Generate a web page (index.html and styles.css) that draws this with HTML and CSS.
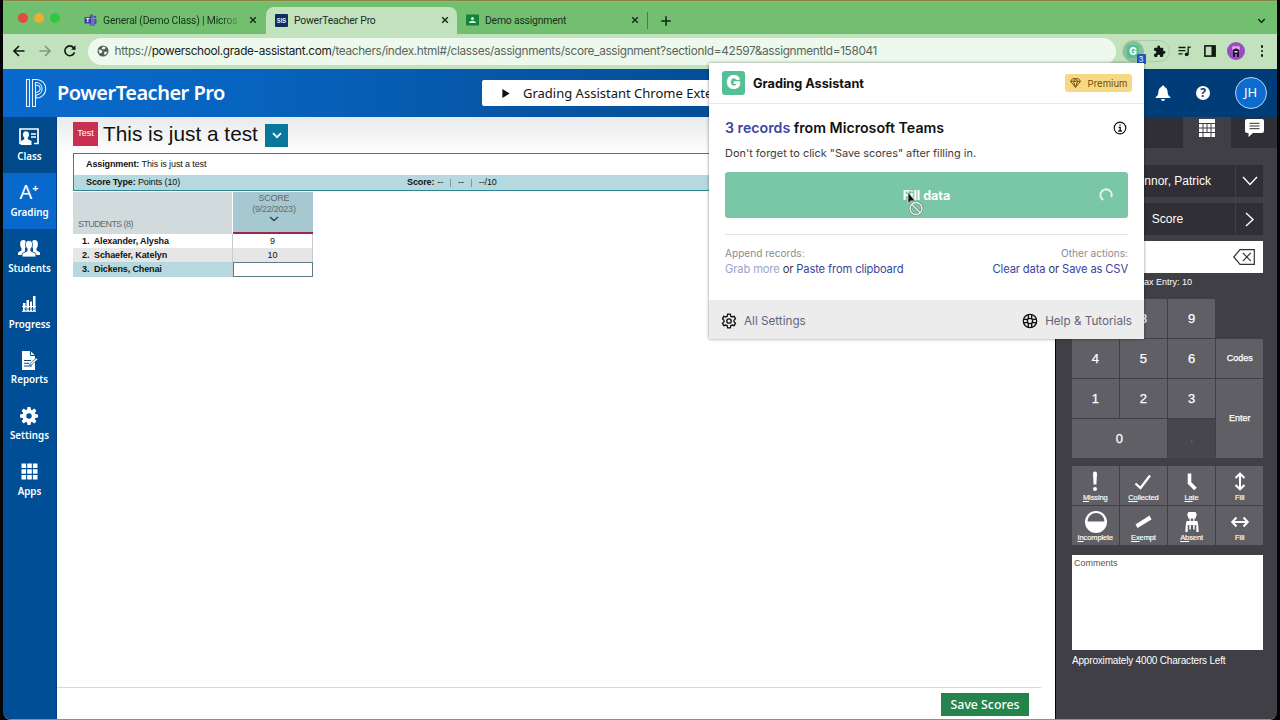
FILE: index.html
```html
<!DOCTYPE html>
<html lang="en">
<head>
<meta charset="utf-8">
<title>PowerTeacher Pro</title>
<link rel="stylesheet" href="styles.css">
</head>
<body>
<div class="window">
  <div class="tabstrip">
    <div class="lights"><i class="red"></i><i class="yellow"></i><i class="green"></i></div>
    <div class="tab tab-teams">
      <svg class="fav" viewBox="0 0 12 12"><circle cx="7" cy="2.2" r="1.9" fill="#5b55b8"/><circle cx="10.5" cy="3" r="1.3" fill="#4f50b5"/><path d="M4 4.5h6v5a2.5 2.5 0 0 1-5 2z" fill="#6f69cc"/><path d="M10 5h2v3.500a2 2 0 0 1-2 2z" fill="#4b4cb0"/><rect y="3" width="6.500" height="6.500" rx=".6" fill="#3f3fae"/><path d="M1.700 4.600h3.200M3.300 4.600v3.600" stroke="#fff" stroke-width="1"/></svg>
      <span class="tab-title fade">General (Demo Class) | Micros</span>
      <svg class="x" viewBox="0 0 8 8"><path d="M1.200 1.200l5.600 5.600M6.800 1.200L1.200 6.800"/></svg>
    </div>
    <div class="tab tab-active">
      <span class="sis">SIS</span>
      <span class="tab-title">PowerTeacher Pro</span>
      <svg class="x" viewBox="0 0 8 8"><path d="M1.200 1.200l5.600 5.600M6.800 1.200L1.200 6.800"/></svg>
    </div>
    <div class="tab tab-demo">
      <svg class="fav" viewBox="0 0 13 11"><rect width="13" height="11" rx="1" fill="#14823b"/><circle cx="6.500" cy="4" r="1.500" fill="#d9f5dc"/><path d="M3 8.500c0-3 7-3 7 0z" fill="#d9f5dc"/></svg>
      <span class="tab-title">Demo assignment</span>
      <svg class="x" viewBox="0 0 8 8"><path d="M1.200 1.200l5.600 5.600M6.800 1.200L1.200 6.800"/></svg>
    </div>
    <i class="tab-sep"></i>
    <svg class="plus" viewBox="0 0 10 10"><path d="M5 .3v9.400M.3 5h9.400"/></svg>
    <svg class="tabs-menu" viewBox="0 0 8 6"><path d="M.8 1l3.200 3.400L7.200 1"/></svg>
  </div>

  <div class="toolbar">
    <svg class="nav-icon back" viewBox="0 0 12 12"><path d="M11.500 6H1.300M6 1L1 6l5 5"/></svg>
    <svg class="nav-icon fwd" viewBox="0 0 12 12"><path d="M.5 6h10.200M6 1l5 5-5 5"/></svg>
    <svg class="nav-icon reload" viewBox="0 0 12 12"><path d="M10.500 7.200A4.900 4.900 0 1 1 9.600 2.700L11 4.200"/><path d="M11.500.3v4.400H7.100z" class="solid"/></svg>
    <div class="omnibox">
      <svg class="globe" viewBox="0 0 12 12"><circle cx="6" cy="6" r="5.500" fill="#555c58"/><path d="M1.500 4.500l3 .5 1 1.500-1 1.500-2 .5zM6 1.500l2.500.5-.5 2-2 .5-1.500-1zM7 7l3-.5-.5 2.500L7.500 10z" fill="#edf9ec"/></svg>
      <span class="url">https://<b>powerschool.grade-assistant.com</b>/teachers/index.html#/classes/assignments/score_assignment?sectionId=42597&amp;assignmentId=158041</span>
    </div>
    <div class="ext-group">
      <span class="ext-ga"><span class="ext-g">G</span><span class="ext-badge">3</span></span>
      <svg class="puzzle" viewBox="0 0 24 24"><path d="M20.500 11H19V7a2 2 0 0 0-2-2h-4V3.500a2.500 2.500 0 0 0-5 0V5H4a2 2 0 0 0-2 2v3.800h1.500a2.700 2.700 0 0 1 0 5.400H2V20a2 2 0 0 0 2 2h3.800v-1.500a2.700 2.700 0 0 1 5.400 0V22H17a2 2 0 0 0 2-2v-4h1.500a2.500 2.500 0 0 0 0-5z"/></svg>
    </div>
    <svg class="queue" viewBox="0 0 13 11"><path d="M.5 1.500h7M.5 4.700h7M.5 7.900h4M12.800 1.200h-2.600v6.500" /><circle cx="8.700" cy="8.300" r="1.900" class="solid"/></svg>
    <svg class="sidepanel" viewBox="0 0 12 12"><rect x=".9" y=".9" width="10.200" height="10.200"/><path d="M7.500 1h3.600v10H7.500z" class="solid"/></svg>
    <svg class="avatar" viewBox="0 0 18 18"><circle cx="9" cy="9" r="9" fill="#9a4dc0"/><path d="M5 5.500l1.500-1.800L9 4.500l2.500-.8L13 5.500 12.500 8h-7z" fill="#e6a6ee"/><path d="M6 15V9.500a3 3 0 0 1 6 0V15h-2v-3H8v3z" fill="#20142c"/><path d="M7.500 9h3v1.500h-3z" fill="#e9dcf0"/></svg>
    <div class="dots"><i></i><i></i><i></i></div>
  </div>

  <header class="app-header">
    <svg class="logo" viewBox="0 0 24 30"><path d="M1.500 1.500h3v27h-3zM7.500 28.500v-27h4a9.200 9.200 0 0 1 0 18.500H11v-3h.6a6.300 6.300 0 0 0 0-12.500H10.500v24zM11 14.200h.6a3.500 3.500 0 0 0 0-7H11"/></svg>
    <h1>PowerTeacher Pro</h1>
    <div class="class-picker"><svg viewBox="0 0 8 10"><path d="M0 0l8 5-8 5z"/></svg><span>Grading Assistant Chrome Exte</span></div>
    <svg class="bell" viewBox="0 0 16 16"><path d="M8 .5c1 0 1.400.6 1.400 1.400C12 2.700 12.600 5 12.700 7.500c.1 2.400 1 3.500 2.600 4.500v1H.7v-1c1.600-1 2.500-2.100 2.600-4.500C3.400 5 4 2.700 6.600 1.900 6.600 1.100 7 .5 8 .5zM6 14h4a2 2 0 0 1-4 0z" fill="#fff"/></svg>
    <span class="help">?</span>
    <span class="user">JH</span>
  </header>

  <div class="body">
    <nav class="sidebar">
      <a><svg width="20" height="17" viewBox="0 0 20 17"><path d="M3 15.500H1V1h18v14.500h-4" fill="none" stroke="#fff" stroke-width="1.700"/><path d="M12 6h5M12 9h5" stroke="#fff" stroke-width="1.500"/><path d="M7 3.300c2 0 3.200 1.500 3 3.700-.1 1.200-.7 2-1.200 2.700v1.600l3.700 1.600V17H2v-4.100l3.300-1.600V9.700C4.600 9 4 8 4 7c-.2-2.200 1-3.700 3-3.700z" fill="#fff"/></svg><span>Class</span></a>
      <a class="on"><span class="aplus">A<sup>+</sup></span><span>Grading</span></a>
      <a><svg width="24" height="18" viewBox="0 0 24 18"><g fill="#fff"><path d="M6.500 1c2 0 2.700 1.500 2.500 3.500 0 2 0 4-1 5v3L6 16H1v-2.500l3.500-2V9.300C3.300 8 3 6 3.200 4 3.300 2 4.500 1 6.500 1zM17.500 1c-2 0-2.700 1.500-2.500 3.500 0 2 0 4 1 5v3l2 3.500h5v-2.500l-3.500-2V9.300C20.700 8 21 6 20.800 4 20.700 2 19.500 1 17.500 1z"/><path d="M12 1.500c2.600 0 3.800 2 3.500 4.500-.2 1.800-.8 2.800-1.600 3.600V12l5 2.500V18H5.100v-3.500l5-2.500V9.600C9.300 8.800 8.700 7.800 8.500 6 8.200 3.500 9.400 1.500 12 1.500z" stroke="#004f96" stroke-width=".8"/></g></svg><span>Students</span></a>
      <a><svg width="14" height="16" viewBox="0 0 14 16"><path d="M1 7h2.500v8H1zM4.500 4H7v11H4.500zM8 5.500h2V15H8zM11 0h2.500v15H11z" fill="#fff"/><path d="M0 10.500h14M0 15.300h14" stroke="#fff" stroke-width="1"/><path d="M3 12v2M6 12v2M9 12v2M12 12v2" stroke="#004f96" stroke-width=".8"/></svg><span>Progress</span></a>
      <a><svg width="17" height="19" viewBox="0 0 17 19"><path d="M1 0h8.500L14 4.500V19H1z" fill="#fff"/><path d="M9.500 0v4.500H14M3 9.500h7M3 12.300h5M3 15h8" stroke="#004f96" fill="none"/><path d="M8.500 14.500l1-2.500 6-5 1.300 1.500-6 5z" fill="#fff" stroke="#004f96" stroke-width=".7"/></svg><span>Reports</span></a>
      <a><svg width="18" height="18" viewBox="0 0 18 18"><g fill="#fff"><circle cx="9" cy="9" r="6.500"/><path d="M7.500 0h3l.8 4H6.700z"/><path d="M7.500 18h3l.8-4H6.700zM0 7.500v3l4 .8V6.700zM18 7.500v3l-4 .8V6.700zM1.600 3.700l2.100-2.100 3.400 2.300-3.200 3.200zM16.400 3.700l-2.100-2.100-3.400 2.300 3.200 3.200zM1.600 14.300l2.100 2.100 3.400-2.300-3.200-3.200zM16.400 14.300l-2.100 2.100-3.400-2.300 3.200-3.200z"/></g><circle cx="9" cy="9" r="2.700" fill="#004f96"/></svg><span>Settings</span></a>
      <a><svg width="17" height="17" viewBox="0 0 17 17"><path d="M.5.5h4.600v4.600H.5zM6.200.5h4.600v4.600H6.200zM11.900.5h4.600v4.600h-4.600zM.5 6.200h4.600v4.600H.5zM6.200 6.200h4.600v4.600H6.200zM11.900 6.200h4.600v4.600h-4.600zM.5 11.900h4.600v4.600H.5zM6.200 11.900h4.600v4.600H6.200zM11.900 11.900h4.600v4.600h-4.600z" fill="#fff"/></svg><span>Apps</span></a>
    </nav>

    <main class="main">
      <div class="title-row"><span class="test-chip">Test</span><h2>This is just a test</h2><span class="title-menu"><svg width="10" height="7" viewBox="0 0 10 7"><path d="M1 1.200l4 4 4-4"/></svg></span></div>
      <div class="info">
        <div class="info-row"><b>Assignment:</b>&nbsp;This is just a test</div>
        <div class="info-row tint"><span class="stype"><b>Score Type:</b>&nbsp;Points (10)</span><span class="sscore"><b>Score:</b> --<i></i>--<i></i>--/10</span></div>
      </div>
      <div class="grid">
        <div class="gh students">STUDENTS (8)</div>
        <div class="gh score"><span>SCORE</span><span>(9/22/2023)</span><svg width="10" height="6" viewBox="0 0 10 6"><path d="M1 1l4 3.500L9 1"/></svg></div>
        <div class="name">1.&nbsp; Alexander, Alysha</div><div class="val">9</div>
        <div class="name alt">2.&nbsp; Schaefer, Katelyn</div><div class="val alt">10</div>
        <div class="name sel">3.&nbsp; Dickens, Chenai</div><div class="val edit"></div>
      </div>
      <div class="footer"><button class="save">Save Scores</button></div>
    </main>

    <aside class="panel">
      <div class="ptabs">
        <span class="pt dark"></span>
        <span class="pt"><svg width="16" height="18" viewBox="0 0 16 18"><path d="M0 0h16v18H0z" fill="#fff"/><path d="M0 4.500h16M0 9h16M0 13.500h16M4 4v9.500M8 4v9.500M12 4v14M4 13.500V18" stroke="#403f46" stroke-width="1"/></svg></span>
        <span class="pt dark last"><svg width="19" height="18" viewBox="0 0 19 18"><path d="M2 0h15a2 2 0 0 1 2 2v10a2 2 0 0 1-2 2H8l-4.500 4V14H2a2 2 0 0 1-2-2V2a2 2 0 0 1 2-2z" fill="#fff"/><path d="M4.500 4.300h10M4.500 7h10M4.500 9.700h10" stroke="#302f35" stroke-width="1"/></svg></span>
      </div>
      <div class="pbody">
        <div class="prow"><span class="pfield">O'Connor, Patrick</span><span class="pchev"><svg width="16" height="10" viewBox="0 0 16 10"><path d="M1 1l7 7.500L15 1"/></svg></span></div>
        <div class="prow second"><span class="pfield">Score</span><span class="pchev"><svg width="9" height="15" viewBox="0 0 9 15"><path d="M1 1l7 6.500L1 14"/></svg></span></div>
        <div class="entry"><svg width="22" height="16" viewBox="0 0 22 16"><path d="M7 .7h14.300v14.600H7L.8 8z"/><path d="M9.800 3.800l8 8.400M17.800 3.800l-8 8.400" stroke-width="1.700"/></svg></div>
        <div class="max">Max Entry: 10</div>
        <div class="keypad">
          <span>7</span><span>8</span><span>9</span><span class="blank"></span>
          <span>4</span><span>5</span><span>6</span><span class="small">Codes</span>
          <span>1</span><span>2</span><span>3</span><span class="small enter">Enter</span>
          <span class="zero">0</span><span class="off">.</span>
        </div>
        <div class="flags">
          <span><svg viewBox="0 0 24 22"><path d="M10 2.500a2 2 0 0 1 4 0l-.6 11h-2.800z" fill="#fff"/><circle cx="12" cy="18" r="2" fill="#fff"/></svg><em><u>M</u>issing</em></span>
          <span><svg viewBox="0 0 24 22"><path d="M4.500 12.500l5 4.500L19 4.500" class="ln" stroke-width="2.300"/></svg><em><u>Co</u>llected</em></span>
          <span><svg viewBox="0 0 24 22"><path d="M9.500 2.500v9.500l6 6" class="ln" stroke-width="3.600"/></svg><em><u>La</u>te</em></span>
          <span><svg viewBox="0 0 24 22"><path d="M12 3v15M7.500 7L12 2.700 16.500 7M7.500 14l4.500 4.300 4.500-4.300" class="ln" stroke-width="2"/></svg><em>Fill</em></span>
          <span><svg viewBox="0 0 24 22"><circle cx="13" cy="11" r="11" fill="#fff"/><path d="M4.500 10.500a8.500 8.500 0 0 1 17 0z" fill="#605f66"/></svg><em><u>In</u>complete</em></span>
          <span><svg viewBox="0 0 24 22"><path d="M4.500 13.500L18.500 4.500l2 4-14 8.500z" fill="#fff"/></svg><em><u>Ex</u>empt</em></span>
          <span><svg viewBox="0 0 24 22"><path d="M8.500 1h7l1.300 2.500-1.300 4h-7L7.200 3.500zM9.500 7h1.300v3.500H9.500zM13.200 7h1.300v3.500h-1.300zM6.500 10h11l.7 4H5.800zM5.800 14h1.900v7H5.300zM9.300 14h1.500v4.500H9.300zM13.200 14h1.500v4.500h-1.500zM16.300 14h1.900l.5 7h-2.400z" fill="#fff"/></svg><em><u>Ab</u>sent</em></span>
          <span><svg viewBox="0 0 24 22"><path d="M4.500 11h15M8.500 6.500L4.200 11l4.300 4.500M15.500 6.500l4.300 4.500-4.300 4.500" class="ln" stroke-width="2"/></svg><em>Fill</em></span>
        </div>
        <div class="comments">Comments</div>
        <div class="left">Approximately 4000 Characters Left</div>
      </div>
    </aside>
  </div>
</div>

<section class="popup">
  <div class="p-head"><span class="g-logo">G</span><strong>Grading Assistant</strong><span class="premium"><svg width="11" height="10" viewBox="0 0 11 10"><path d="M2.500.7h6l2 2.600-5 6-5-6zM.5 3.300h10M3.500 3.300l2 6 2-6-2-2.500z"/></svg><span>Premium</span></span></div>
  <div class="p-main">
    <div class="p-title"><span><b>3 records</b> from Microsoft Teams</span><svg width="14" height="14" viewBox="0 0 14 14"><circle cx="7" cy="7" r="5.800"/><path d="M5.600 6.300H7.200v3.500M5.300 10h3.600M7 3.400v1.300" stroke-width="1.300"/></svg></div>
    <p class="hint">Don't forget to click "Save scores" after filling in.</p>
    <div class="fill"><span>Fill data</span><svg class="spin" width="14" height="14" viewBox="0 0 14 14"><path d="M4.200 11.800A5.600 5.600 0 1 1 12.200 9.200"/></svg>
      <svg class="cursor" width="17" height="26" viewBox="0 0 17 26"><path d="M1 1v11.500l2.700-2.600h4.500z" fill="#111" stroke="#e9f5ef" stroke-width=".7"/><circle cx="9" cy="17.500" r="6" fill="none" stroke="#6d8177" stroke-width="2.600"/><path d="M5 13.500l8 8" stroke="#6d8177" stroke-width="2.600"/><circle cx="9" cy="17.500" r="6" fill="none" stroke="#e7f5ee" stroke-width="1.400"/><path d="M5 13.500l8 8" stroke="#e7f5ee" stroke-width="1.400"/></svg></div>
    <div class="actions">
      <div><small>Append records:</small><span><a class="dim">Grab more</a> or <a>Paste from clipboard</a></span></div>
      <div class="r"><small>Other actions:</small><span><a>Clear data</a> or <a>Save as CSV</a></span></div>
    </div>
  </div>
  <div class="p-foot">
    <svg width="16" height="16" viewBox="0 0 24 24"><path d="M10 1.800h4l.7 3 2 1.200 3-.9 2 3.500-2.200 2.200v2.400l2.200 2.200-2 3.500-3-.9-2 1.200-.7 3h-4l-.7-3-2-1.200-3 .9-2-3.500 2.200-2.200v-2.400L2.300 8.600l2-3.500 3 .9 2-1.200z"/><circle cx="12" cy="12" r="3.300"/></svg><span>All Settings</span>
    <svg class="buoy" width="16" height="16" viewBox="0 0 24 24"><circle cx="12" cy="12" r="10"/><circle cx="12" cy="12" r="4"/><path d="M9.500 2.500v6.200M14.500 2.500v6.200M9.500 21.500v-6.200M14.500 21.500v-6.200M2.500 9.500h6.200M2.500 14.500h6.200M21.500 9.500h-6.200M21.500 14.500h-6.200"/></svg><span>Help &amp; Tutorials</span>
  </div>
</section>
</body>
</html>
```

FILE: styles.css
```css
* { box-sizing: border-box; }
body { margin: 0; width: 1280px; height: 720px; overflow: hidden; background: #050505; position: relative; font-family: "Liberation Sans", Arial, sans-serif; }
svg { display: block; flex: none; fill: none; }
.window { margin: 0 3px; width: 1274px; height: 720px; display: flex; flex-direction: column; border-top: 1px solid #8b8545; border-bottom: 1px solid #8d8d93; border-radius: 0 0 8px 8px; overflow: hidden; }

/* browser tabs */
.tabstrip { height: 33px; flex: none; background: #72bf70; border-top: 1px solid #8fbd62; display: flex; align-items: center; padding-top: 5px; font-family: Roboto, sans-serif; font-size: 10.400px; color: #173219; white-space: nowrap; }
.lights { display: flex; gap: 6px; padding-left: 14.500px; width: 71px; flex: none; margin-top: -5px; }
.lights i { width: 10.300px; height: 10.300px; border-radius: 50%; }
.red { background: #e5493f; } .yellow { background: #e9b02f; } .green { background: #2fc840; }
.tab { height: 27px; display: flex; align-items: center; flex: none; padding-bottom: 1px; }
.tab-teams { width: 192px; padding-left: 10px; }
.tab-active { width: 191px; background: #c1e2bc; border-radius: 8px 8px 0 0; padding-left: 9px; color: #1c2b1d; }
.tab-demo { width: 190px; padding-left: 9px; }
.tab .fav { width: 13px; height: 12px; margin-right: 6px; }
.tab-title { flex: 1; letter-spacing: -.2px; overflow: hidden; }
.fade { flex: none; width: 140px; margin-right: 6px; -webkit-mask-image: linear-gradient(90deg, #000 84%, transparent 100%); mask-image: linear-gradient(90deg, #000 84%, transparent 100%); }
.tab .x { width: 8px; height: 8px; stroke: #152a17; stroke-width: 1.400; margin-right: 8px; }
.sis { width: 13px; height: 13px; background: #0d2e5e; color: #d8ecf6; font: bold 6px/13px Inter, sans-serif; text-align: center; border-radius: 1px; margin-right: 6px; }
.tab-sep { width: 1px; height: 17px; background: #447d45; margin-top: -1px; }
.plus { width: 10px; height: 10px; stroke: #142316; stroke-width: 1.500; margin: 0 0 0 13px; }
.tabs-menu { width: 9px; height: 6px; stroke: #142316; stroke-width: 1.500; margin: 0 11px 0 auto; }

/* browser toolbar */
.toolbar { height: 35px; flex: none; background: #c1e2bc; display: flex; align-items: center; padding: 0 0 1px 10px; }
.nav-icon { width: 12px; height: 12px; stroke: #101912; stroke-width: 1.600; margin-right: 13.500px; }
.fwd { stroke: #7c9b7c; }
.solid { fill: #101912; stroke: none; }
.reload { margin-right: 11.500px; }
.omnibox { width: 1028px; height: 27px; border-radius: 14px; background: #edf9ec; display: flex; align-items: center; padding-left: 9px; flex: none; }
.globe { width: 12px; height: 12px; margin-right: 6px; }
.url { font: 11.800px/16px Inter, sans-serif; letter-spacing: -.33px; color: #5b645d; white-space: nowrap; }
.url b { font-weight: 400; color: #19221b; }
.ext-group { width: 48px; height: 22px; margin-left: 6px; border: 1px solid #a9cda6; border-radius: 11px; display: flex; align-items: center; gap: 9px; flex: none; }
.ext-ga { width: 21px; height: 21px; border-radius: 50%; background: #87bf9b; position: relative; display: flex; align-items: center; justify-content: center; }
.ext-g { width: 12px; height: 13px; background: #53bf97; color: #fff; font: 800 10px/13px Inter, sans-serif; text-align: center; border-radius: 2px; }
.ext-badge { position: absolute; right: -2px; bottom: -2px; width: 9px; height: 10px; background: #1b56c4; color: #fff; font: 8px/10px Inter, sans-serif; text-align: center; border-radius: 1px; }
.puzzle { width: 13px; height: 13px; fill: #101912; }
.queue { width: 13px; height: 11px; stroke: #101912; stroke-width: 1.300; margin-left: 8px; }
.sidepanel { width: 12px; height: 12px; stroke: #101912; stroke-width: 1.600; margin-left: 13px; }
.avatar { width: 18px; height: 18px; margin-left: 11px; }
.dots { display: flex; flex-direction: column; gap: 2px; margin-left: 16px; }
.dots i { width: 2.400px; height: 2.400px; background: #101912; border-radius: 50%; }

/* application header */
.app-header { height: 48px; flex: none; background: linear-gradient(90deg, #0a69cd 0, #0765c1 17%, #0656a6 40%, #03498f 65%, #003c77 92%); display: flex; align-items: center; padding-left: 22px; }
.logo { width: 24px; height: 30px; stroke: #e6f2fc; stroke-width: 1.100; }
h1 { margin: 0 0 0 8px; width: 425px; flex: none; font: 600 20px/28px "Noto Sans", sans-serif; letter-spacing: -.5px; color: #fff; white-space: nowrap; }
.class-picker { width: 228px; height: 26px; background: #fff; border-radius: 2px 0 0 2px; display: flex; align-items: center; padding-left: 20px; font: 13px/20px "Noto Sans", sans-serif; color: #151515; white-space: nowrap; flex: none; }
.class-picker svg { width: 8px; height: 9px; fill: #111; margin-right: 13px; }
.bell { width: 16px; height: 16px; margin-left: 445px; }
.help { width: 14px; height: 14px; border-radius: 50%; background: #fff; color: #063c75; font: bold 12px/14px "Noto Sans", sans-serif; text-align: center; margin-left: 25px; }
.user { width: 32px; height: 32px; border-radius: 50%; border: 1.500px solid #b6d6f3; background: #0c6bcd; color: #fff; font: 13px/29px "Noto Sans", sans-serif; text-align: center; margin-left: 24.500px; }

.body { flex: 1; display: flex; min-height: 0; }
.sidebar { width: 54px; background: #004f96; flex: none; display: flex; flex-direction: column; border-right: 1px solid #00407f; }
.sidebar a { height: 55.900px; display: flex; flex-direction: column; align-items: center; color: #fff; }
.sidebar a:first-child { background: #00498a; }
.sidebar a.on { background: #0968cb; }
.sidebar a svg { margin: auto; }
.sidebar a > span:last-child { font: 600 9.800px/14px "Noto Sans", sans-serif; margin-bottom: 9px; }
.sidebar a svg, .aplus { position: relative; top: 3px; left: -.5px; }
.aplus { font: 20px/26px "Noto Sans", sans-serif; margin: auto; display: flex; }
.aplus sup { font: bold 11px/18px "Noto Sans", sans-serif; }

/* score sheet */
.main { width: 998px; flex: none; background: #fff linear-gradient(#e9eaec, #fff 38px) no-repeat; display: flex; flex-direction: column; padding-left: 16px; color: #111; }
.title-row { height: 36px; display: flex; align-items: center; }
.test-chip { width: 25px; height: 24px; background: #c92f50; color: #fff; font-size: 9px; line-height: 23px; text-align: center; margin-top: -3px; }
h2 { margin: -3px 0 0 5px; font-size: 20.800px; font-weight: 400; line-height: 24px; white-space: nowrap; width: 162px; }
.title-menu { width: 23px; height: 23px; background: #08779c; display: flex; align-items: center; justify-content: center; }
.title-menu path { stroke: #fff; stroke-width: 1.800; }
.info { border: 1px solid #2d8493; border-right: 0; height: 38px; font-size: 9px; letter-spacing: -.12px; background: #fff; }
.info-row { height: 21px; line-height: 21px; padding-left: 12px; display: flex; white-space: nowrap; }
.tint { background: #b6d9df; height: 15px; line-height: 15px; }
.stype { width: 321px; }
.sscore { display: flex; align-items: center; }
.sscore b { margin-right: 3px; }
.sscore i { width: 1px; height: 8px; background: #789aa0; margin: 0 7px; }
.grid { width: 240px; margin-top: 1px; display: grid; grid-template-columns: 160px 80px; grid-template-rows: 42px 14.200px 14.200px 14.200px; font-size: 9px; }
.gh { color: #62696c; }
.students { background: #d1dadd; border-right: 1px solid #fff; padding: 27px 0 0 5px; font-size: 9px; letter-spacing: -.6px; }
.score { background: #a6c9d1; border-bottom: 2px solid #9c2849; display: flex; flex-direction: column; align-items: center; line-height: 10.500px; font-size: 9px; letter-spacing: -.25px; padding: 1px 0 0 2px; }
.score svg { margin-top: 2px; }
.score path { stroke: #26454d; stroke-width: 1.400; }
.name { padding-left: 9px; font-weight: bold; letter-spacing: -.12px; line-height: 14px; border-right: 1px solid #c7cdcf; white-space: pre; background: #fff; }
.val { text-align: center; line-height: 14px; border-right: 1px solid #c7cdcf; }
.alt { background: #e6e6e7; }
.sel { background: #b6d9df; }
.edit { border: 1px solid #5c7d86; background: #fff; }
.footer { margin: auto 14px 0 -16px; height: 32px; border-top: 1px solid #d9d9dc; display: flex; justify-content: flex-end; align-items: flex-start; padding: 5px 12px 0 0; }
.save { width: 88px; height: 23px; border: 0; padding: 0; background: #24844b; color: #fff; font: 500 12.300px/23px "Noto Sans", sans-serif; }

/* score inspector */
.panel { flex: 1; min-width: 0; margin-left: 1px; background: #403f46; color: #fff; }
.ptabs { height: 31px; display: flex; }
.pt { width: 48px; display: flex; justify-content: center; padding-top: 2px; flex: none; }
.pt:first-child { width: 127px; }
.dark { background: #302f35; }
.pt.last { flex: 1; }
.pbody { width: 191px; margin: 17px 0 0 16px; display: flex; flex-direction: column; }
.prow { display: flex; gap: 1px; height: 32px; }
.second { margin-top: 6px; }
.pfield { flex: 1; background: #302f35; text-align: center; font-size: 12px; line-height: 32px; white-space: nowrap; }
.prow:first-child .pfield { padding: 0 24px 0 0; text-align: right; }
.second .pfield { padding-left: 28px; }
.pchev { width: 27px; background: #302f35; display: flex; align-items: center; justify-content: center; }
.pchev path { stroke: #fff; stroke-width: 1.400; }
.entry { height: 32px; background: #fff; margin-top: 6px; display: flex; align-items: center; justify-content: flex-end; padding-right: 8px; }
.entry path { stroke: #333; stroke-width: 1.200; }
.max { height: 25.500px; padding-right: 71px; text-align: right; font-size: 9px; line-height: 18px; white-space: nowrap; }
.keypad { display: grid; grid-template-columns: repeat(4, minmax(0, 1fr)); grid-template-rows: repeat(4, 39px); gap: 1px 1.500px; }
.keypad span { background: #605f66; font-size: 13px; -webkit-text-stroke: .25px; display: flex; align-items: center; justify-content: center; padding-top: 1px; }
.keypad .small { font-size: 9px; padding: 0; }
.keypad .blank { background: none; }
.keypad .enter { grid-row: 3 / 5; grid-column: 4; }
.keypad .zero { grid-column: 1 / 3; }
.keypad .off { background: #47464d; color: #77767d; font-size: 10px; }
.flags { margin-top: 8.500px; display: grid; grid-template-columns: repeat(4, minmax(0, 1fr)); grid-template-rows: 39px 39px; gap: 1px 1.500px; }
.flags span { background: #605f66; display: flex; flex-direction: column; align-items: center; padding-top: 5px; }
.flags svg { width: 24px; height: 22px; }
.ln { stroke: #fff; }
.flags em { font-style: normal; font-size: 7.500px; line-height: 10px; letter-spacing: -.1px; -webkit-text-stroke: .15px; }
.comments { margin-top: 10px; height: 95px; background: #fff; color: #555; font-size: 9px; padding: 3px 2px; }
.left { font-size: 10px; letter-spacing: -.18px; line-height: 12px; margin-top: 5px; white-space: nowrap; }

/* extension popup */
.popup { position: absolute; left: 709px; top: 63px; width: 435px; height: 276px; background: #fff; box-shadow: 0 0 3px rgba(0, 0, 0, .45); font-family: Inter, sans-serif; color: #111; display: flex; flex-direction: column; }
.p-head { height: 41px; border-bottom: 1px solid #e8e8ea; display: flex; align-items: center; padding: 0 12px 0 13px; }
.g-logo { width: 23px; height: 24px; border-radius: 3px; background: #55c095; color: #fff; font-weight: 900; font-size: 19px; line-height: 24px; text-align: center; }
.p-head strong { font-weight: 700; font-size: 12.700px; margin-left: 8px; white-space: nowrap; }
.premium { margin-left: auto; width: 67px; height: 18px; border-radius: 3px; background: #f7d983; color: #6f4d12; display: flex; align-items: center; gap: 6.500px; padding-left: 5px; font-size: 9.600px; }
.premium path { stroke: #7a5314; stroke-width: 1; }
.p-main { padding: 15px 16px 0; flex: 1; }
.p-title { display: flex; justify-content: space-between; align-items: center; font-weight: 600; font-size: 14.200px; line-height: 18px; white-space: nowrap; }
.p-title b { font-weight: 600; color: #3c46a0; }
.p-title svg { stroke: #111; stroke-width: 1.200; margin-right: 1px; }
.hint { margin: 8px 0 11px; font-size: 10.950px; line-height: 16px; color: #3c3c40; white-space: nowrap; }
.fill { height: 46px; background: #79c7a6; border-radius: 3px; display: flex; align-items: center; justify-content: center; color: #fff; font-weight: 700; font-size: 12.500px; position: relative; }
.spin { position: absolute; right: 15px; top: 16px; stroke: #e4f5ed; stroke-width: 2; }
.cursor { position: absolute; left: 182px; top: 19px; }
.actions { margin-top: 16px; border-top: 1px solid #e4e4e8; padding-top: 11px; display: flex; justify-content: space-between; font-size: 11.200px; letter-spacing: -.14px; line-height: 16px; color: #3a3a44; white-space: nowrap; }
.actions > div { display: flex; flex-direction: column; }
.actions small { font-size: 10.100px; letter-spacing: 0; line-height: 15px; color: #8b8b90; }
.actions a { color: #3a459c; }
.actions .dim { color: #9ea3ca; }
.r { align-items: flex-end; }
.p-foot { height: 39px; background: #ececed; display: flex; align-items: center; padding: 2px 12px 0 12px; font-size: 11.700px; color: #64647a; white-space: nowrap; gap: 7px; }
.p-foot svg { stroke: #111; stroke-width: 2; }
.buoy { margin-left: auto; }
```
